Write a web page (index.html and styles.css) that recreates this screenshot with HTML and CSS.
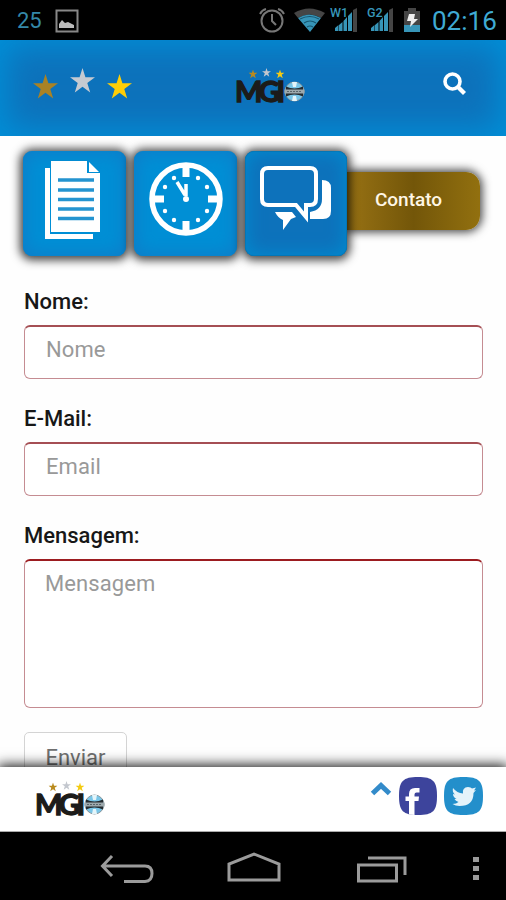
FILE: index.html
```html
<!DOCTYPE html>
<html lang="pt-BR">
<head>
<meta charset="utf-8">
<title>MGI - Contato</title>
<link rel="stylesheet" href="styles.css">
</head>
<body>
<svg class="defs" width="0" height="0" aria-hidden="true">
  <symbol id="star" viewBox="0 0 24 24"><path d="M12 0l2.800 8.800H24l-7.400 5.500L19.400 23.500 12 17.900 4.600 23.500l2.800-9.200L0 8.800h9.200z"/></symbol>
  <symbol id="emblem" viewBox="0 0 72 38">
    <use href="#star" x="13.500" y="1.500" width="9" height="9" fill="#b98a1d"/>
    <use href="#star" x="27" y="0" width="9" height="9" fill="#c3c7ce"/>
    <use href="#star" x="40.500" y="1.500" width="9" height="9" fill="#f4cb12"/>
    <circle cx="59.500" cy="23.500" r="9.500" fill="#79c6e8" stroke="#8c989e" stroke-width="1"/>
    <path d="M57 14h5l-1 5h-3zM57 33h5l-1-5h-3z" fill="#e4f5fa"/>
    <path d="M51 18.500q8.500 4 17 0v10q-8.500-4-17 0z" fill="#252b2f"/>
    <path d="M49.500 21.500h20v4h-20z" fill="#9da9ad"/>
    <path d="M52 23.500h15" stroke="#59666b" stroke-width="1.200" stroke-dasharray="2 1"/>
  </symbol>
</svg>
<div class="phone">
  <div class="status">
    <span class="count">25</span>
    <svg class="shot" width="24" height="24" viewBox="0 0 24 24"><path d="M1.500 1.500h21v21h-21z" fill="none" stroke="#888" stroke-width="2"/><path d="M4 19v-4l3-4 3 3 3-1 6 3v3z" fill="#bbb"/></svg>
    <svg class="signals" width="164" height="40" viewBox="0 0 164 40">
      <g fill="none" stroke="#777" stroke-width="2"><circle cx="13" cy="21" r="10.500"/><path d="M13 14v7l4 4M1 14q2-4 6-5M25 14q-2-4-6-5"/></g>
      <path d="M35 13q15-9 31 0l-4 5q-11-7-23 0z" fill="#454545"/>
      <path d="M39 18q11-7 23 0L51 32z" fill="#3795b8"/>
      <path d="M41 19q10-5 19 0M45 23q6-4 12 0M48 27q3-2 6 0" stroke="#16566f" fill="none" stroke-width="1.200"/>
      <g fill="#3795b8"><path d="M76 31v-3l3.500-3v6zM80 31v-6l3.500-3v9zM84.500 31V21l3.500-4v14zM89 31V16l4-4v19zM112 31v-3l3.500-3v6zM116 31v-6l3.500-3v9zM120.500 31V21l3.500-4v14zM125 31V16l4-4v19z"/></g>
      <path d="M94 10l4-2v24h-4zM130 10l4-2v24h-4z" fill="#454545"/>
      <g fill="#3795b8" font-family="Roboto, sans-serif" font-weight="500" font-size="12.500"><text x="71" y="17">W1</text><text x="108" y="17">G2</text></g>
      <path d="M145 11h4V8h8v3h4v21h-16z" fill="#454545"/><path d="M145 25h16v7h-16z" fill="#3795b8"/><path d="M150 14h6l-1 5h4l-8 8 1-6h-4z" fill="#eee"/>
    </svg>
    <span class="time">02:16</span>
  </div>
  <header class="header">
    <svg class="stars" width="100" height="34" viewBox="0 0 100 34"><use href="#star" y="6" width="25" height="25" fill="#a98225"/><use href="#star" x="37" width="25" height="25" fill="#c6cad1"/><use href="#star" x="74" y="6" width="25" height="25" fill="#ffce06"/></svg>
    <svg class="logo" width="72" height="38" viewBox="0 0 72 38"><text class="brand" x="0" y="33.500" textLength="50" lengthAdjust="spacing">MGI</text><use href="#emblem"/></svg>
    <svg class="search" width="24" height="24" viewBox="0 0 24 24"><circle cx="9.500" cy="9.500" r="7.500" fill="none" stroke="#fff" stroke-width="3.600"/><path d="M15 15l6.500 6.500" stroke="#fff" stroke-width="4.300"/></svg>
  </header>
  <main class="content">
    <nav class="tabs">
      <a class="tile"><svg width="103" height="105" viewBox="0 0 103 105"><path d="M22 17h5v66h43v5H22z" fill="#fff"/><path d="M28 10h36v12h13v59H28z" fill="#fff"/><path d="M66 11l10 10H66z" fill="#fff"/><path d="M35 29h36M35 39h36M35 48.500h36M35 58h36M35 67.500h36" stroke="#2494d0" stroke-width="3.500"/></svg></a>
      <a class="tile"><svg width="103" height="105" viewBox="0 0 103 105"><g transform="translate(52 48)"><circle r="34" fill="none" stroke="#fff" stroke-width="5.500"/><path d="M0-33v11M0 33V22M-33 0h11M33 0H22" stroke="#fff" stroke-width="7"/><g fill="#fff"><circle cx="12" cy="-21" r="2.200"/><circle cx="21" cy="-12" r="2.200"/><circle cx="12" cy="21" r="2.200"/><circle cx="21" cy="12" r="2.200"/><circle cx="-12" cy="21" r="2.200"/><circle cx="-21" cy="12" r="2.200"/><circle cx="-12" cy="-21" r="2.200"/><circle cx="-21" cy="-12" r="2.200"/><circle r="3"/></g><path d="M0-3v-12M-1-4l-8-13" stroke="#fff" stroke-width="3.500"/></g></svg></a>
      <a class="tile active"><svg width="102" height="105" viewBox="0 0 102 105"><path d="M23 17h42q6 0 6 6v25q0 6-6 6h-4v12L51 54H23q-6 0-6-6V23q0-6 6-6z" fill="#0d72bb" stroke="#fff" stroke-width="4"/><path d="M77 29q9 0 9 8v23q0 8-8 8H65v-7q12-2 12-13z" fill="#fff"/><path d="M30 61h17l4 5-5 2-8 11v-10q-5-2-8-8z" fill="#fff"/></svg></a>
      <span class="current">Contato</span>
    </nav>
    <form class="form">
      <label for="nome">Nome:</label>
      <input id="nome" type="text" placeholder="Nome">
      <label for="email">E-Mail:</label>
      <input id="email" type="text" placeholder="Email">
      <label for="mensagem">Mensagem:</label>
      <textarea id="mensagem" placeholder="Mensagem"></textarea>
      <button type="button">Enviar</button>
    </form>
  </main>
  <footer class="footer">
    <svg class="logo" width="72" height="38" viewBox="0 0 72 38"><text class="brand" x="0" y="33.500" textLength="50" lengthAdjust="spacing">MGI</text><use href="#emblem"/></svg>
    <svg class="up" width="22" height="16" viewBox="0 0 22 16"><path d="M2.500 12.500L11 4.500l8.500 8" fill="none" stroke="#338bca" stroke-width="5"/></svg>
    <svg class="facebook" width="38" height="38" viewBox="0 0 38 38"><path d="M19 0C34 0 38 4 38 19s-4 19-19 19S0 34 0 19 4 0 19 0z" fill="#3d449c"/><path d="M10 37.500V24H6.500v-4.500H10V17q0-6 6-6h4.500v4.500h-3q-2 0-2 2v2h4.500l-.5 4.500h-4v14z" fill="#fff"/></svg>
    <svg class="twitter" width="39" height="38" viewBox="0 0 39 38"><path d="M19.500 0C35 0 39 4 39 19s-4 19-19.500 19S0 34 0 19 4 0 19.500 0z" fill="#238fcb"/><path d="M9 11q4 5 10 5.500-1-6 5-6.500 3 0 4 1.500l4-1-2 3 2-.5-2.500 3q0 13-14 13-4 0-7-2 4 0 6-2-3-1-4-3h2q-3.500-2-3.500-5l2 .5Q8 15 9 11z" fill="#e5f3fa"/></svg>
  </footer>
  <div class="softkeys">
    <svg width="506" height="69" viewBox="0 0 506 69"><g fill="none" stroke="#9b9b9b" stroke-width="3"><path d="M112 24l-9.500 10 9.500 10M103 34h42q7 0 7 7.500t-7 8h-21M229 48V32l25-10 25 10v16zM358.500 33h38v16h-38zM368 26h37v17"/></g><path d="M473 25h6v5h-6zM473 34h6v5h-6zM473 43h6v5h-6z" fill="#9b9b9b"/></svg>
  </div>
</div>
</body>
</html>
```
FILE: styles.css
```css
* { box-sizing: border-box; }
body { margin: 0; background: #000; font-family: Roboto, sans-serif; }
svg { display: block; flex: none; }
.defs { position: absolute; }
.phone { width: 506px; height: 900px; display: flex; flex-direction: column; overflow: hidden; }

.status { height: 40px; flex: none; display: flex; align-items: center; background: #000; color: #3faad3; }
.count { width: 38px; margin-left: 17px; font-size: 22px; color: #3488a8; padding-top: 1px; }
.shot { margin-top: 1px; }
.signals { margin-left: 180px; }
.time { margin-left: 9px; font-size: 26px; padding-top: 2px; }

.header { height: 96px; flex: none; display: flex; align-items: flex-start; background: #0d72bb; box-shadow: inset 0 0 32px 6px #0090d8; }
.stars { margin: 28px 0 0 33px; }
.header .logo { margin: 28px 0 0 102px; }
.brand { font: 700 29px Lato, sans-serif; fill: #1c1b19; stroke: #1c1b19; stroke-width: 1.3px; }
.search { margin: 32px 0 0 136px; }

.content { height: 631px; flex: none; overflow: hidden; background: #fefefe; padding: 15px 23px 0 22px; }
.tabs { display: flex; height: 105px; padding-left: 1px; }
.tile { width: 103px; height: 105px; margin-right: 8px; flex: none; border-radius: 9px; background: #008fd5; box-shadow: inset 0 0 18px 2px #0f7cc8, 0 1px 10px 3px rgba(0, 0, 0, .75); }
.tile.active { width: 102px; margin: 0; background: #0d72bb; box-shadow: inset 0 0 18px 2px #008bd0, inset 0 0 0 1px #0b5c93, 0 1px 10px 3px rgba(0, 0, 0, .75); z-index: 1; }
.current { width: 133px; height: 58px; margin-top: 21px; border-radius: 0 14px 14px 0; background: linear-gradient(90deg, #987214, #735609 50%, #92700f); box-shadow: 0 0 10px 2px rgba(0, 0, 0, .75); color: #fff6e5; font-size: 19px; font-weight: 500; line-height: 56px; text-align: center; padding-right: 10px; }

.form { display: flex; flex-direction: column; margin: 32px 0 0 2px; }
.form label { height: 26px; line-height: 28px; margin-bottom: 11px; font-size: 22px; font-weight: 500; color: #171717; }
.form input, .form textarea { width: 459px; margin: 0 0 26px; border: 1px solid #c58c92; border-top: 2px solid #a54f54; border-radius: 6px; background: #fff; font: 22px Roboto, sans-serif; letter-spacing: .1px; outline: 0; }
.form input { height: 54px; padding: 0 20px 6px 21px; }
.form textarea { height: 149px; padding: 10px 20px; resize: none; margin-bottom: 24px; border-top-color: #9c1c20; }
.form ::placeholder { color: #999; opacity: 1; }
.form button { width: 103px; height: 54px; padding: 0 0 3px; border: 1px solid #d4d4d4; border-radius: 5px; background: #fff; color: #707070; font: 22px Roboto, sans-serif; }

.footer { height: 65px; flex: none; display: flex; align-items: flex-start; background: #fff; border-bottom: 1px solid #aaa; box-shadow: 0 0 12px 2px rgba(0, 0, 0, .9); position: relative; }
.footer .logo { margin: 14px 0 0 35px; }
.up { margin: 14px 0 0 263px; }
.facebook { margin: 10px 0 0 7px; }
.twitter { margin: 10px 0 0 7px; }
.softkeys { height: 68px; flex: none; background: #000; position: relative; }
```
